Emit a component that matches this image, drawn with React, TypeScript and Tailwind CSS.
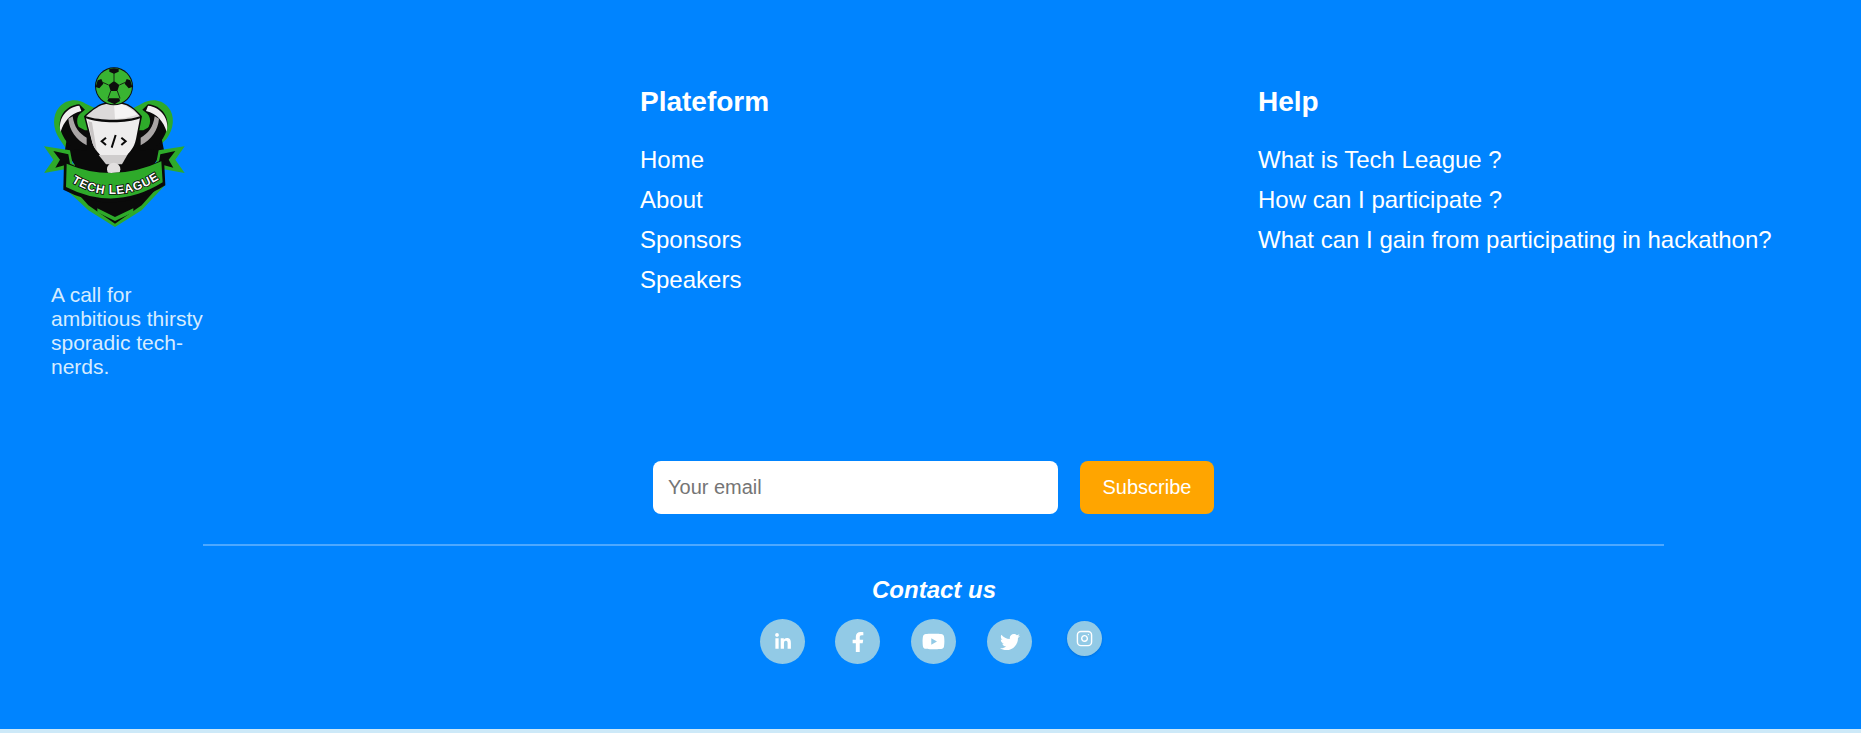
import { Instagram } from "lucide-react";
import { FaFacebookF, FaYoutube, FaTwitter, FaLinkedinIn } from "react-icons/fa";

function Logo() {
  // viewBox follows the crop coordinates of the badge
  return (
    <svg width="144" height="160" viewBox="70 50 430 480" className="block">
      <defs>
        <path id="bannerCurve" d="M150 392 Q280 476 422 384" />
      </defs>
      {/* green outer shape */}
      <path d="M197 160 C175 145 140 145 118 170 C96 195 98 235 118 265 L145 305 L400 305 L440 265 C462 235 466 195 444 170 C422 145 390 145 365 160 L330 178 L235 178 Z" fill="#2eaa2a" />
      <path d="M130 410 L182 458 L205 480 L285 530 L365 480 L385 458 L435 405 L420 340 L145 340 Z" fill="#2eaa2a" />
      {/* black inner */}
      <path d="M148 215 L195 240 L370 240 L415 215 L432 300 L400 345 L405 420 L365 465 L285 520 L205 465 L165 420 L165 345 L135 300 Z" fill="#0a0a0a" />
      <path d="M232 474 L285 500 L340 474 L340 486 L285 512 L232 486 Z" fill="#2eaa2a" />
      {/* handles */}
      <path d="M178 162 C135 165 108 205 124 245 C130 262 145 285 165 298 L200 300 L195 250 C170 235 165 205 180 190 L195 178 Z" fill="#0a0a0a" />
      <path d="M384 162 C427 165 454 205 438 245 C432 262 417 285 397 298 L362 300 L367 250 C392 235 397 205 382 190 L367 178 Z" fill="#0a0a0a" />
      <path d="M178 166 C140 170 112 205 122 244 C132 214 150 190 184 182 Z" fill="#f1efef" />
      <path d="M384 166 C422 170 450 205 440 244 C430 214 412 190 378 182 Z" fill="#f1efef" />
      <path d="M145 205 C148 240 168 268 200 285 L200 262 C178 250 162 230 158 198 Z" fill="#a9a5a5" />
      <path d="M417 205 C414 240 394 268 362 285 L362 262 C384 250 400 230 404 198 Z" fill="#a9a5a5" />
      <path d="M178 195 L200 178 L205 240 Z" fill="#2eaa2a" />
      <path d="M384 195 L362 178 L357 240 Z" fill="#2eaa2a" />
      {/* cup */}
      <path d="M192 198 C205 185 225 170 240 162 C262 152 302 152 324 162 C340 170 355 185 366 198 L352 268 C346 298 334 306 326 318 L236 318 C228 306 216 298 210 268 Z" fill="#0a0a0a" />
      <path d="M198 198 C210 186 228 172 244 165 C264 157 300 157 320 165 C336 172 350 186 360 198 C320 212 240 212 198 198 Z" fill="#dcdada" />
      <path d="M282 160 C300 157 318 163 352 192 C330 202 305 205 285 206 Z" fill="#f5f4f4" />
      <path d="M198 204 C240 220 320 220 360 204 L348 266 C342 295 330 302 322 314 L240 314 C232 302 220 295 214 266 Z" fill="#eeeded" />
      <path d="M204 212 C208 214 212 215 216 216 L230 300 C222 292 218 282 214 262 Z" fill="#c9c6c6" />
      <path d="M236 314 L322 314 L306 342 L258 342 Z" fill="#cfcdcd" />
      <circle cx="281" cy="357" r="20" fill="#e2e0e0" />
      {/* code mark */}
      <path d="M258 262 L245 273 L258 284 M304 262 L317 273 L304 284 M287 254 L275 292" fill="none" stroke="#0a0a0a" strokeWidth="6" />
      {/* ball */}
      <circle cx="282" cy="108" r="57" fill="#0d0d0d" />
      <circle cx="282" cy="108" r="54" fill="#39b432" />
      <path d="M282 92 L298 104 L292 122 L272 122 L266 104 Z" fill="#0d0d0d" />
      <path d="M268 56 L282 54 L296 56 L296 64 L282 70 L268 64 Z" fill="#0d0d0d" />
      <path d="M320 86 L331 90 L337 110 L326 114 L314 100 Z" fill="#0d0d0d" />
      <path d="M244 86 L233 90 L227 110 L238 114 L250 100 Z" fill="#0d0d0d" />
      <path d="M266 144 L298 144 L300 152 L284 162 L262 152 Z" fill="#0d0d0d" />
      <path d="M282 92 L282 68 M298 104 L316 96 M292 122 L300 144 M272 122 L264 144 M266 104 L248 96" stroke="#0d0d0d" strokeWidth="2.5" fill="none" />
      {/* banner tails */}
      <path d="M72 288 L150 300 L160 352 L72 368 L100 328 Z" fill="#2eaa2a" />
      <path d="M494 288 L416 300 L406 352 L494 368 L466 328 Z" fill="#2eaa2a" />
      <path d="M100 302 L145 312 L150 340 L106 352 L120 328 Z" fill="#0a0a0a" />
      <path d="M466 302 L421 312 L416 340 L460 352 L446 328 Z" fill="#0a0a0a" />
      {/* banner */}
      <path d="M132 332 Q280 408 432 325 L436 405 Q285 500 130 418 Z" fill="#0a0a0a" />
      <path d="M140 340 Q280 400 424 333 L428 396 Q285 485 138 410 Z" fill="#2eaa2a" />
      <text fontFamily="'Liberation Sans', sans-serif" fontWeight="700" fontSize="36" fill="#fff" stroke="#0a0a0a" strokeWidth="5" paintOrder="stroke">
        <textPath href="#bannerCurve" startOffset="50%" textAnchor="middle" textLength="280" lengthAdjust="spacing">TECH LEAGUE</textPath>
      </text>
    </svg>
  );
}

function FooterLink({ label }: { label: string }) {
  return <a href="#" className="block text-white text-2xl leading-[40px]">{label}</a>;
}

function SocialButton({ children, className = "" }: { children: React.ReactNode; className?: string }) {
  return (
    <a href="#" className={`w-[45px] h-[45px] rounded-full bg-[#92cae6] flex items-center justify-center text-white ${className}`}>
      {children}
    </a>
  );
}

export default function App() {
  return (
    <div className="font-['Liberation_Sans',Arial,sans-serif]">
      <footer className="bg-[#0084ff] h-[729px] pt-[65px]">
        {/* top columns */}
        <div className="grid grid-cols-[640px_618px_1fr] h-[395px]">
          <div className="pl-[43px] pt-[2px]">
            <Logo />
            <p className="mt-[56px] ml-2 w-[165px] text-[21px] leading-[24px] text-[#d6ecff]">
              A call for ambitious thirsty sporadic tech-nerds.
            </p>
          </div>
          <div className="pt-[20px]">
            <h3 className="text-white text-[28px] font-bold leading-[34px] mb-[21px]">Plateform</h3>
            <FooterLink label="Home" />
            <FooterLink label="About" />
            <FooterLink label="Sponsors" />
            <FooterLink label="Speakers" />
          </div>
          <div className="pt-[20px]">
            <h3 className="text-white text-[28px] font-bold leading-[34px] mb-[21px]">Help</h3>
            <FooterLink label="What is Tech League ?" />
            <FooterLink label="How can I participate ?" />
            <FooterLink label="What can I gain from participating in hackathon?" />
          </div>
        </div>

        {/* subscribe */}
        <div className="flex pl-[653px] gap-[22px] mt-px">
          <input
            placeholder="Your email"
            className="w-[405px] h-[53px] bg-white rounded-lg px-[15px] text-[20px] outline-none placeholder:text-[#757575]"
          />
          <button className="w-[134px] h-[53px] pb-[2px] bg-[#ffa500] rounded-lg text-white text-[20px]">Subscribe</button>
        </div>

        <div className="ml-[203px] mt-[30px] w-[1461px] h-[2px] bg-[#4da8ff]" />

        {/* contact */}
        <p className="mt-[30px] pl-[7px] text-center text-white text-2xl font-bold italic leading-[28px]">Contact us</p>
        <div className="mt-[15px] pl-[760px] flex items-start gap-[31px]">
          <SocialButton className="-mr-px"><FaLinkedinIn size={18} /></SocialButton>
          <SocialButton><FaFacebookF size={20} /></SocialButton>
          <SocialButton><FaYoutube size={23} /></SocialButton>
          <SocialButton><FaTwitter size={20} /></SocialButton>
          <a href="#" className="mt-[2px] ml-[4px] w-[35px] h-[35px] rounded-full bg-[#92cae6] shadow-sm flex items-center justify-center text-white">
            <Instagram size={17} />
          </a>
        </div>
      </footer>
      <div className="h-[4px] bg-[#cde9f8]" />
    </div>
  );
}
